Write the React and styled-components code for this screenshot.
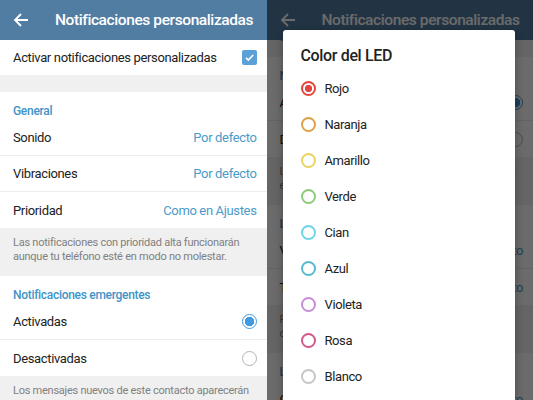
import React, { useLayoutEffect, useRef } from 'react';
import styled, { createGlobalStyle } from 'styled-components';

const GlobalStyle = createGlobalStyle`
  html, body { margin: 0; padding: 0; }
  body {
    font-family: Roboto, "Noto Sans", "Liberation Sans", sans-serif;
    background: #fff;
    color: #222;
  }
`;

const LED_COLORS = [
  { name: 'Rojo', color: '#e4453f', checked: true },
  { name: 'Naranja', color: '#e0a043' },
  { name: 'Amarillo', color: '#e9d25f' },
  { name: 'Verde', color: '#8ecb78' },
  { name: 'Cian', color: '#6ad6e8' },
  { name: 'Azul', color: '#56bad0' },
  { name: 'Violeta', color: '#c68ed9' },
  { name: 'Rosa', color: '#d4588a' },
  { name: 'Blanco', color: '#c6c6c6' },
];

const BackArrow = () => (
  <ArrowIcon width="16" height="16" viewBox="0 0 16 16">
    <path d="M15 8H2M8 2L2 8l6 6" fill="none" stroke="#fff" strokeWidth="1.8" />
  </ArrowIcon>
);

const Content = () => (
  <>
    <Row height={35}>
      <Label>Activar notificaciones personalizadas</Label>
      <Checkbox>
        <svg width="11" height="11" viewBox="0 0 11 11">
          <path d="M2 5.8l2.3 2.3L9.2 3" fill="none" stroke="#fff" strokeWidth="1.6" />
        </svg>
      </Checkbox>
    </Row>
    <Gap />
    <Section>
      <SectionTitle>General</SectionTitle>
      <Row divider>
        <Label>Sonido</Label>
        <Value>Por defecto</Value>
      </Row>
      <Row divider>
        <Label>Vibraciones</Label>
        <Value>Por defecto</Value>
      </Row>
      <Row>
        <Label>Prioridad</Label>
        <Value>Como en Ajustes</Value>
      </Row>
    </Section>
    <Info>
      Las notificaciones con prioridad alta funcionarán
      <br />
      aunque tu teléfono esté en modo no molestar.
    </Info>
    <Section>
      <SectionTitle>Notificaciones emergentes</SectionTitle>
      <Row divider>
        <Label>Activadas</Label>
        <Radio checked />
      </Row>
      <Row>
        <Label>Desactivadas</Label>
        <Radio />
      </Row>
    </Section>
    <Info>
      Los mensajes nuevos de este contacto aparecerán
      <br />
      en una ventana emergente en la pantalla.
    </Info>
    <Section>
      <SectionTitle>Llamadas</SectionTitle>
      <Row divider>
        <Label>Vibraciones</Label>
        <Value>Por defecto</Value>
      </Row>
      <Row>
        <Label>Tono de llamada</Label>
        <Value>Por defecto</Value>
      </Row>
    </Section>
    <Info>
      Puedes personalizar el tono de llamada para
      <br />
      cada contacto de forma independiente.
    </Info>
    <Section>
      <SectionTitle>LED</SectionTitle>
      <Row>
        <Label>Color</Label>
        <Value>Por defecto</Value>
      </Row>
    </Section>
    <Info>Elige el color del LED para este contacto.</Info>
  </>
);

const Screen = ({ scroll = 0, children }) => {
  const listRef = useRef(null);
  useLayoutEffect(() => {
    if (listRef.current) listRef.current.scrollTop = scroll;
  }, [scroll]);
  return (
    <Phone>
      <Header>
        <BackArrow />
        <Title>Notificaciones personalizadas</Title>
      </Header>
      <List ref={listRef}>
        <Content />
      </List>
      {children}
    </Phone>
  );
};

const LedDialog = () => (
  <>
    <Dim />
    <Dialog>
      <DialogTitle>Color del LED</DialogTitle>
      {LED_COLORS.map((c) => (
        <Option key={c.name}>
          <ColorRadio color={c.color} checked={c.checked} />
          <span>{c.name}</span>
        </Option>
      ))}
    </Dialog>
  </>
);

export default function App() {
  return (
    <Page>
      <GlobalStyle />
      <Screen />
      <Screen scroll={219}>
        <LedDialog />
      </Screen>
    </Page>
  );
}

const Page = styled.div`
  display: flex;
  width: 533px;
  height: 400px;
  overflow: hidden;
`;

const Phone = styled.div`
  position: relative;
  flex: 1 1 0;
  display: flex;
  flex-direction: column;
  height: 400px;
  overflow: hidden;
  background: #fff;
`;

const Header = styled.div`
  flex: 0 0 40px;
  display: flex;
  align-items: center;
  gap: 26px;
  padding: 0 13px;
  background: #527da3;
`;

const ArrowIcon = styled.svg`
  flex-shrink: 0;
`;

const Title = styled.div`
  color: #fff;
  font-size: 15.5px;
  letter-spacing: -0.4px;
  font-weight: 500;
  white-space: nowrap;
`;

const List = styled.div`
  flex: 1;
  overflow: hidden;
`;

const Section = styled.div`
  background: #fff;
`;

const SectionTitle = styled.div`
  padding: 13px 13px 2px;
  font-size: 12px;
  letter-spacing: -0.3px;
  line-height: 13px;
  font-weight: 500;
  color: #3f94c8;
`;

const Row = styled.div`
  display: flex;
  align-items: center;
  justify-content: space-between;
  height: ${(p) => p.height || 36}px;
  padding: 0 10px 0 13px;
  background: #fff;
  border-bottom: ${(p) => (p.divider ? '1px solid #ececec' : 'none')};
  box-sizing: border-box;
`;

const Label = styled.span`
  font-size: 13px;
  letter-spacing: -0.35px;
  color: #222;
  white-space: nowrap;
`;

const Value = styled.span`
  font-size: 13px;
  letter-spacing: -0.35px;
  color: #4a9bc9;
  white-space: nowrap;
`;

const Gap = styled.div`
  height: 17px;
  background: #f0f0f0;
`;

const Info = styled.div`
  padding: 8px 13px 12px;
  background: #f0f0f0;
  color: #808080;
  font-size: 11px;
  letter-spacing: -0.25px;
  line-height: 14px;
  white-space: nowrap;
`;

const Checkbox = styled.span`
  display: flex;
  align-items: center;
  justify-content: center;
  width: 15px;
  height: 15px;
  border-radius: 2px;
  background: #5ca0d8;
`;

const Radio = styled.span`
  width: 13px;
  height: 13px;
  border-radius: 50%;
  border: 1.5px solid ${(p) => (p.checked ? '#3f9ae1' : '#b2b2b2')};
  background: ${(p) =>
    p.checked ? 'radial-gradient(circle, #3f9ae1 0 4.5px, #fff 5px)' : '#fff'};
`;

const Dim = styled.div`
  position: absolute;
  inset: 0;
  background: rgba(0, 0, 0, 0.58);
`;

const Dialog = styled.div`
  position: absolute;
  top: 30px;
  left: 16px;
  right: 18px;
  bottom: -20px;
  padding: 16px 18px 0;
  background: #fff;
  border-radius: 3px;
  box-shadow: 0 2px 10px rgba(0, 0, 0, 0.3);
`;

const DialogTitle = styled.div`
  font-size: 16px;
  letter-spacing: -0.35px;
  font-weight: 500;
  color: #222;
  margin-bottom: 5px;
`;

const Option = styled.div`
  display: flex;
  align-items: center;
  gap: 9px;
  height: 36px;
  font-size: 13px;
  letter-spacing: -0.4px;
  color: #222;
`;

const ColorRadio = styled.span`
  width: 11px;
  height: 11px;
  border-radius: 50%;
  border: 2px solid ${(p) => p.color};
  background: ${(p) =>
    p.checked ? `radial-gradient(circle, ${p.color} 0 3.4px, #fff 3.9px)` : '#fff'};
`;
